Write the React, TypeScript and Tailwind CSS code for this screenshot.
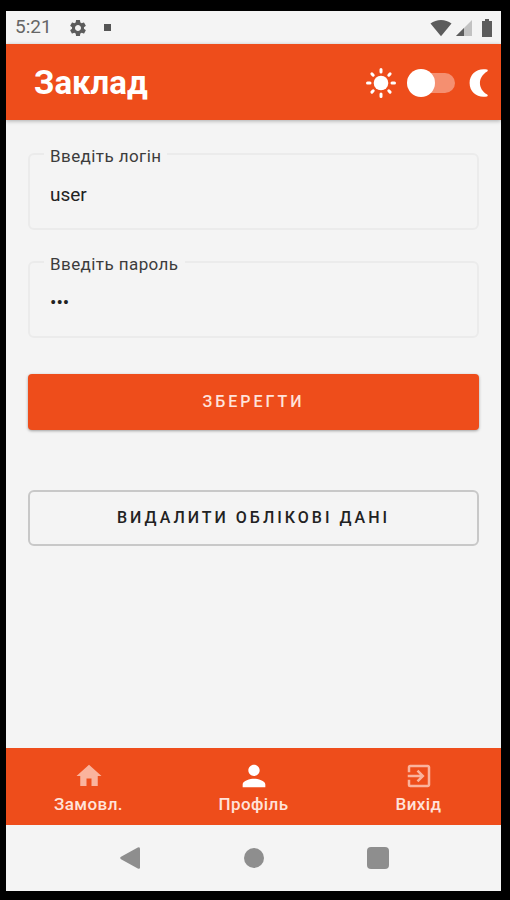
import { FC, ReactNode, useState } from 'react';
import { MdExitToApp, MdHome, MdPerson, MdSettings } from 'react-icons/md';

const StatusBar: FC = () => (
  <div className="flex h-[33px] shrink-0 items-center justify-between px-[9px] text-[#5c5c5c]">
    <div className="flex items-center">
      <span className="text-[19px] text-[#666666]">5:21</span>
      <MdSettings className="ml-4 h-5 w-5" />
      <span className="ml-4 h-[7px] w-[7px] bg-[#555555]" />
    </div>
    <div className="flex items-center">
      <svg className="h-[18px] w-[22px]" viewBox="0 0 22 18" fill="currentColor">
        <path d="M0.5 4.5C6.5-0.2 15.5-0.2 21.5 4.5L11 17.2Z" />
      </svg>
      <svg className="ml-1 h-4 w-4" viewBox="0 0 16 16">
        <path d="M16 0V16H0Z" fill="#c2c2c2" />
        <path d="M8 8V16H0Z" fill="currentColor" />
      </svg>
      <svg className="ml-2.5 h-[18px] w-[10px]" viewBox="0 0 10 18" fill="currentColor">
        <path d="M3 0H7V2H10V18H0V2H3Z" />
      </svg>
    </div>
  </div>
);

const SunIcon: FC = () => (
  <svg
    className="h-8 w-8"
    viewBox="0 0 32 32"
    fill="none"
    stroke="white"
    strokeWidth="3"
    strokeLinecap="round"
  >
    <circle cx="16" cy="16" r="7.3" fill="white" stroke="none" />
    <path d="M16 2.5V5M16 27V29.5M2.5 16H5M27 16H29.5M6.9 6.9L8.2 8.2M23.8 23.8L25.1 25.1M6.9 25.1L8.2 23.8M23.8 8.2L25.1 6.9" />
  </svg>
);

const MoonIcon: FC = () => (
  <svg className="h-7 w-5" viewBox="0 0 20 28" fill="white">
    <path d="M18 0.6C9-1.5 0.6 4.5 0.6 14C0.6 23.5 9 29.5 18 27.4Q19.4 26.8 18.2 25.6C8.5 20 8.5 8 18.2 2.4Q19.4 1.2 18 0.6Z" />
  </svg>
);

const Header: FC = () => {
  const [isDark, setIsDark] = useState(false);

  return (
    <header className="z-10 flex h-[76px] shrink-0 items-center justify-between bg-[#ee4d1b] pt-px pr-3 pl-7 shadow-[0_1px_4px_rgba(0,0,0,0.3)]">
      <h1 className="text-[33px] leading-10 font-bold text-white">Заклад</h1>
      <div className="flex items-center gap-2.5">
        <SunIcon />
        <label className="relative flex h-7 w-12 items-center">
          <input
            type="checkbox"
            aria-label="Темна тема"
            checked={isDark}
            onChange={(e) => setIsDark(e.target.checked)}
            className="peer absolute inset-0 opacity-0"
          />
          <span className="ml-2 h-5 w-10 rounded-full bg-[#f58f70]" />
          <span className="absolute left-0 h-7 w-7 rounded-full bg-white peer-checked:left-5" />
        </label>
        <span className="ml-1">
          <MoonIcon />
        </span>
      </div>
    </header>
  );
};

const TextField: FC<{
  id: string;
  label: string;
  type: string;
  defaultValue: string;
}> = ({ id, label, type, defaultValue }) => (
  <fieldset className="rounded-md border-2 border-[#ebebeb] px-3.5">
    <legend className="px-1.5 pt-1 text-[17px] leading-5 tracking-wide text-[#3c3c3c]">
      <label htmlFor={id}>{label}</label>
    </legend>
    <input
      id={id}
      type={type}
      defaultValue={defaultValue}
      className="mb-1.5 block h-14 w-full bg-transparent px-1.5 text-[19px] text-[#222222] outline-none"
    />
  </fieldset>
);

const NavItem: FC<{ icon: ReactNode; label: string; active?: boolean }> = ({
  icon,
  label,
  active = false,
}) => (
  <a
    href="#"
    className="flex flex-1 flex-col items-center justify-center pt-0.5 text-[17px] leading-6 font-medium tracking-wide text-[#ffe3da]"
  >
    <span
      className={`flex h-8 items-center ${active ? 'text-white' : 'text-[#fab39d]'}`}
    >
      {icon}
    </span>
    {label}
  </a>
);

export default function App() {
  return (
    <div className="flex min-h-screen bg-black pt-[11px] pr-[9px] pb-[9px] pl-1.5 font-[Roboto,sans-serif]">
      <div className="flex flex-1 flex-col bg-[#f4f4f4]">
        <StatusBar />
        <Header />
        <main className="flex flex-1 flex-col px-[22px] pt-[22px]">
          <form className="flex flex-col" onSubmit={(e) => e.preventDefault()}>
            <div className="flex flex-col gap-5">
              <TextField
                id="login"
                label="Введіть логін"
                type="text"
                defaultValue="user"
              />
              <TextField
                id="password"
                label="Введіть пароль"
                type="password"
                defaultValue="123"
              />
            </div>
            <button
              type="submit"
              className="mt-9 h-14 rounded bg-[#ee4d1b] text-base font-medium tracking-[3px] text-[#ffe3da] shadow-[0_1px_3px_rgba(0,0,0,0.35)]"
            >
              ЗБЕРЕГТИ
            </button>
            <button
              type="button"
              className="mt-[60px] h-14 rounded-md border-2 border-[#c8c8c8] text-base font-medium tracking-[3px] text-[#222222]"
            >
              ВИДАЛИТИ ОБЛІКОВІ ДАНІ
            </button>
          </form>
        </main>
        <nav className="flex h-[77px] shrink-0 bg-[#ee4d1b]">
          <NavItem icon={<MdHome className="h-[30px] w-[30px]" />} label="Замовл." />
          <NavItem
            icon={<MdPerson className="h-[34px] w-[34px]" />}
            label="Профіль"
            active
          />
          <NavItem
            icon={<MdExitToApp className="h-[30px] w-[30px]" />}
            label="Вихід"
          />
        </nav>
        <div className="flex h-[66px] shrink-0 items-center justify-center gap-[103px] text-[#8e8e8e]">
          <button type="button" aria-label="Назад">
            <svg className="h-[22px] w-[22px]" viewBox="0 0 22 22" fill="currentColor">
              <path d="M18.8 0.6Q21 -0.4 21 1.8V20.2Q21 22.4 18.8 21.4L2 12.2Q0.4 11 2 9.8Z" />
            </svg>
          </button>
          <button type="button" aria-label="Додому">
            <span className="block h-5 w-5 rounded-full bg-current" />
          </button>
          <button type="button" aria-label="Огляд">
            <span className="block h-[22px] w-[22px] rounded-sm bg-current" />
          </button>
        </div>
      </div>
    </div>
  );
}
